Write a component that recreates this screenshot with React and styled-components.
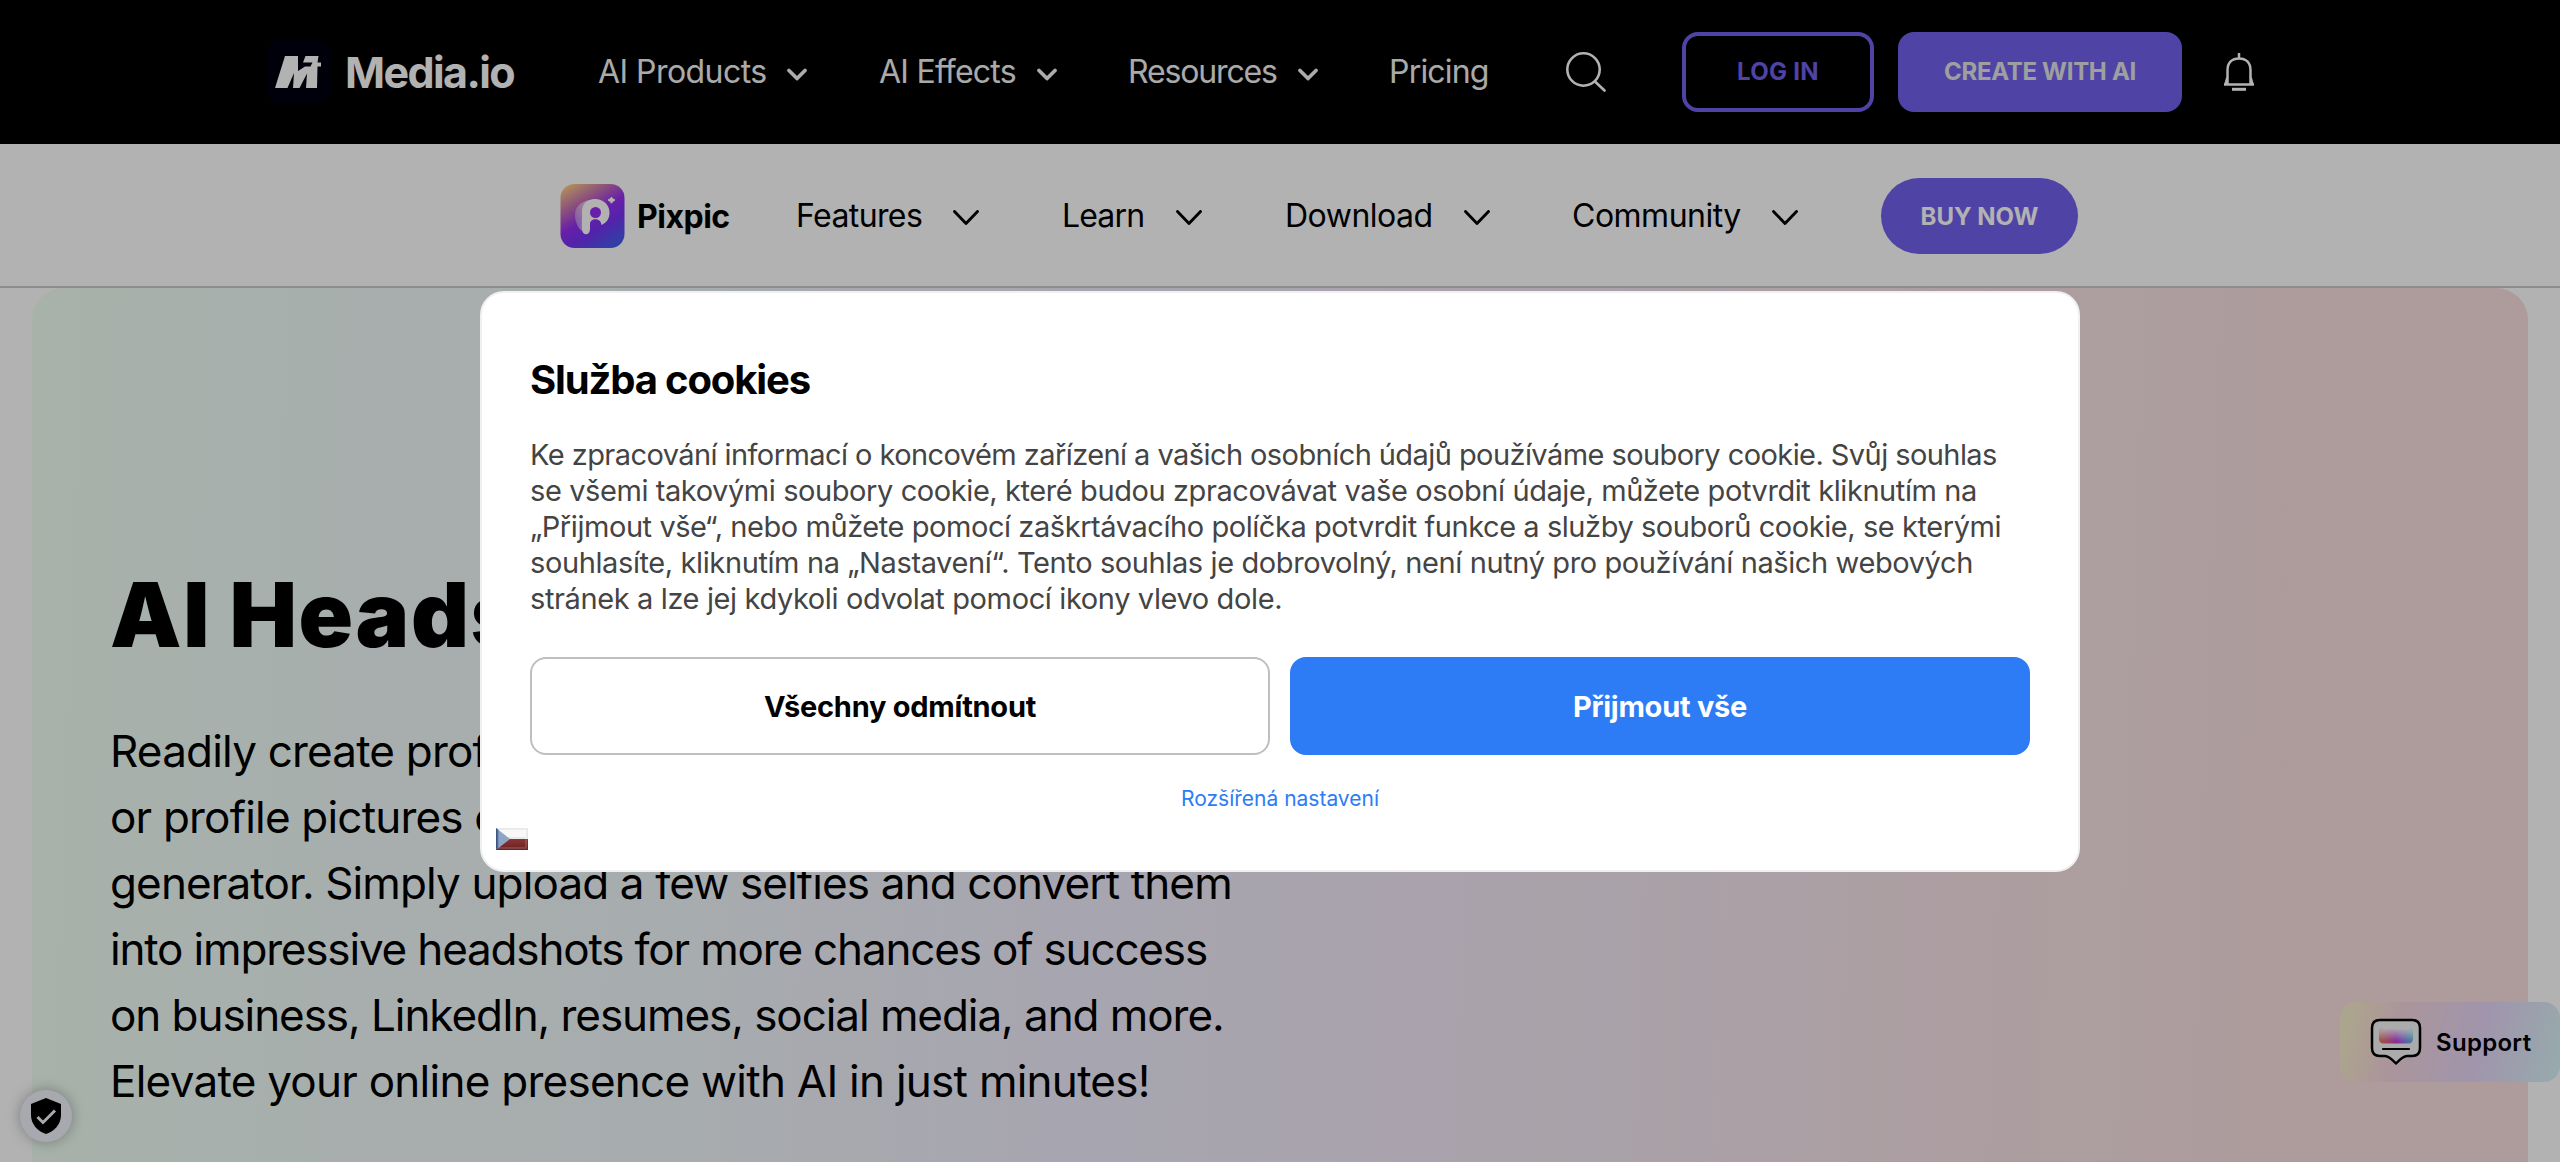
import React from 'react';
import styled, { createGlobalStyle } from 'styled-components';

const Global = createGlobalStyle`
  *, *::before, *::after { box-sizing: border-box; }
  body { margin: 0; background: #fff; overflow: hidden; font-family: Inter, "Open Sans", "Noto Sans", sans-serif; color: #000; }
  h1, h2, p { margin: 0; }
  button, a { font-family: inherit; text-decoration: none; }
`;

const Page = styled.div`
  position: relative;
  height: 1162px;
  overflow: hidden;
  display: flex;
  flex-direction: column;
`;

const TopBar = styled.header`
  flex: 0 0 144px;
  display: flex;
  align-items: center;
  padding-left: 266px;
  background: #000;
  color: #fff;
`;

const Brand = styled.a`
  display: flex;
  align-items: center;
  width: 332px;
  gap: 15px;
  font-size: 43px;
  font-weight: 700;
  letter-spacing: -1.6px;
  white-space: nowrap;
`;

const NavItem = styled.a`
  display: flex;
  align-items: center;
  justify-content: space-between;
  flex: 0 0 auto;
  width: ${(p) => p.$width}px;
  margin-right: ${(p) => p.$after}px;
  font-size: 32px;
  line-height: 40px;
  font-weight: 430;
  letter-spacing: ${(p) => p.$track || 0}px;
  color: ${(p) => p.$color || '#000'};
  white-space: nowrap;
  svg { flex: none; margin-top: ${(p) => p.$drop || 0}px; }
`;

const IconSlot = styled.span`
  display: flex;
  flex: none;
  margin-right: ${(p) => p.$after || 0}px;
`;

const ActionButton = styled.button`
  flex: none;
  width: ${(p) => p.$width}px;
  height: 80px;
  margin-right: ${(p) => p.$after}px;
  padding: 0 0 1px;
  border: 4px solid #7161ed;
  border-radius: 16px;
  background: ${(p) => (p.$filled ? '#7161ed' : 'transparent')};
  color: ${(p) => (p.$filled ? '#e4e4e4' : '#7161ed')};
  font-size: 24px;
  font-weight: 700;
  letter-spacing: ${(p) => p.$track}px;
`;

const SubBar = styled.nav`
  flex: 0 0 144px;
  display: flex;
  align-items: center;
  padding: 2px 0 0 560px;
  border-bottom: 2px solid #cbcbcb;
  background: #fff;
`;

const Product = styled.a`
  display: flex;
  align-items: center;
  gap: 12px;
  width: 236px;
  font-size: 32px;
  font-weight: 700;
  letter-spacing: -0.5px;
`;

const BuyButton = styled.button`
  width: 197px;
  height: 76px;
  border: 0;
  border-radius: 38px;
  background: #7161ed;
  color: #fff;
  font-size: 24px;
  font-weight: 700;
  letter-spacing: 0;
`;

const Hero = styled.main`
  flex: 1;
  margin: 0 32px;
  padding: 260px 0 0 78px;
  border-radius: 32px 32px 0 0;
  background: linear-gradient(92deg, #effff3 0%, #effbf8 12%, #f0f8f9 24%, #f0edfc 42%, #f2eaf8 54%, #f4e7f0 66%, #f7e2e5 80%, #f9dfdf 92%, #f9dfdf 100%);
`;

const Headline = styled.h1`
  font-size: 90px;
  line-height: 134px;
  font-weight: 860;
  letter-spacing: 1.6px;
  word-spacing: -1px;
  white-space: nowrap;
`;

const Lead = styled.p`
  display: flex;
  flex-direction: column;
  margin-top: 36px;
  font-size: 44px;
  line-height: 66px;
`;

const Line = styled.span`
  white-space: nowrap;
  letter-spacing: ${(p) => p.$track}px;
`;

const SupportTab = styled.aside`
  position: absolute;
  right: 0;
  top: 1002px;
  width: 220px;
  height: 80px;
  display: flex;
  align-items: center;
  gap: 14px;
  padding-left: 30px;
  border-radius: 16px;
  background: linear-gradient(104deg, #f7edca 5%, #f5d6de 26%, #e6d6f7 63%, #d8f5f6 100%);
  font-size: 24px;
  font-weight: 600;
  letter-spacing: 0.3px;
`;

const PrivacyBadge = styled.aside`
  position: absolute;
  left: 20px;
  top: 1090px;
  width: 52px;
  height: 52px;
  display: flex;
  align-items: center;
  justify-content: center;
  border-radius: 50%;
  background: #f0f3f9;
  box-shadow: 0 0 14px rgba(0, 0, 0, 0.3);
`;

const Backdrop = styled.div`
  position: absolute;
  inset: 0;
  display: flex;
  align-items: center;
  justify-content: center;
  padding-top: 1px;
  background: rgba(0, 0, 0, 0.3);
`;

const Dialog = styled.section`
  width: 1600px;
  height: 581px;
  display: flex;
  flex-direction: column;
  padding: 63px 48px 0;
  border: 2px solid #f0f0f0;
  border-radius: 24px;
  background: #fff;
`;

const DialogTitle = styled.h2`
  font-size: 40px;
  line-height: 48px;
  font-weight: 700;
  letter-spacing: -1.15px;
`;

const DialogText = styled.p`
  display: flex;
  flex-direction: column;
  margin-top: 33px;
  color: #444;
  font-size: 29px;
  line-height: 36px;
`;

const Choices = styled.div`
  display: flex;
  gap: 20px;
  margin-top: 40px;
`;

const Choice = styled.button`
  flex: 1;
  height: 98px;
  border: 2px solid ${(p) => (p.$primary ? '#2d7cf6' : '#bfbfbf')};
  border-radius: 16px;
  background: ${(p) => (p.$primary ? '#2d7cf6' : '#fff')};
  color: ${(p) => (p.$primary ? '#fff' : '#000')};
  font-size: 29px;
  font-weight: 700;
  letter-spacing: -0.25px;
`;

const SettingsLink = styled.a`
  align-self: center;
  margin-top: 30px;
  color: #2d7cf6;
  font-size: 21px;
  line-height: 28px;
`;

const Language = styled.div`
  display: flex;
  margin: 15px 0 0 -34px;
`;

const SmallChevron = () => (
  <svg width="20" height="14" viewBox="0 0 20 14" fill="none" stroke="#f7f7f7" strokeWidth="3.6" strokeLinecap="round" strokeLinejoin="round">
    <path d="M2 2.4 10 10.6 18 2.4" />
  </svg>
);

const WideChevron = () => (
  <svg width="26" height="16" viewBox="0 0 26 16" fill="none" stroke="#000" strokeWidth="2.9" strokeLinecap="round" strokeLinejoin="round">
    <path d="M1.5 1.5 13 13.4 24.5 1.5" />
  </svg>
);

const MediaLogo = () => (
  <svg width="64" height="64" viewBox="0 0 64 64">
    <rect width="64" height="64" rx="14" fill="#010110" />
    <path fill="#fff" d="M9 48 19 16H32V31L39 26.500H44.500L46.500 22.500H37L39.500 16H52.500L51.500 22.500H55V26.500H51.500L51 48H40L41 33.500 33.500 48H27L28 33 21.500 48Z" />
  </svg>
);

const PixpicLogo = () => (
  <svg width="65" height="64" viewBox="0 0 65 64">
    <defs>
      <linearGradient id="px" x1="0.12" y1="0" x2="0.72" y2="1">
        <stop offset="0" stopColor="#ffd080" />
        <stop offset="0.28" stopColor="#c874b0" />
        <stop offset="0.52" stopColor="#942ff0" />
        <stop offset="0.72" stopColor="#7733f5" />
        <stop offset="1" stopColor="#4a58ee" />
      </linearGradient>
      <linearGradient id="pg" x1="0" y1="0" x2="1" y2="0">
        <stop offset="0" stopColor="#fff" stopOpacity="0.35" />
        <stop offset="1" stopColor="#fff" stopOpacity="0.8" />
      </linearGradient>
    </defs>
    <rect x="0.500" width="64" height="64" rx="14" fill="url(#px)" />
    <path d="M35 15.500C22 16 15 22 15 31C15 38 18 44 22 47L29 30Z" fill="url(#pg)" />
    <path d="M35 15C27 15 22 20 22 28V45C22 52 30 52 30 45V40C30 37 32.500 35.300 35.500 35.300C39 35.300 41 37.500 41.500 41C47 38.500 49.500 34 49.500 28.500C49.500 20.500 43 15 35 15Z" fill="#fff" />
    <circle cx="35.500" cy="28.500" r="5.500" fill="#942ff0" />
    <path d="M51.500 13.200 53 15 55 16 53 17.200 51.500 19.200 50 17.200 48 16 50 15Z" fill="#fff" stroke="#fff" />
  </svg>
);

const SearchIcon = () => (
  <svg width="40" height="40" viewBox="0 0 40 40" fill="none" stroke="#fff" strokeWidth="2.600" strokeLinecap="round">
    <circle cx="17.500" cy="17.500" r="16.200" />
    <path d="m29.500 30 9 8.500" />
  </svg>
);

const BellIcon = () => (
  <svg width="30" height="38" viewBox="0 0 30 38" fill="none" stroke="#fff" strokeWidth="2.500">
    <path d="M15 0v5M3.500 31V17.500C3.500 9.500 8 5.500 15 5.500S26.500 9.500 26.500 17.500V31M0 31.500h30M3.500 24 1.500 31M26.500 24l2 7" />
    <path d="M8 36.300h14" strokeWidth="3" />
  </svg>
);

const ChatIcon = () => (
  <svg width="52" height="48" viewBox="0 0 52 48">
    <defs>
      <linearGradient id="chat" x1="0" y1="0.400" x2="1" y2="0.300">
        <stop offset="0" stopColor="#e8785c" />
        <stop offset="0.480" stopColor="#c63ddb" />
        <stop offset="0.620" stopColor="#a26af0" />
        <stop offset="1" stopColor="#52cbe0" />
      </linearGradient>
      <linearGradient id="fade" x1="0" y1="0" x2="0" y2="1">
        <stop offset="0" stopColor="#fff" stopOpacity="0.950" />
        <stop offset="1" stopColor="#fff" stopOpacity="0" />
      </linearGradient>
    </defs>
    <path d="M10 2H42Q50 2 50 10V30Q50 38 42 38H37Q33 38 26 45.500Q19 38 15 38H10Q2 38 2 30V10Q2 2 10 2Z" fill="#f5f5f7" stroke="#000" strokeWidth="2.500" strokeLinejoin="round" />
    <rect x="9" y="10" width="34" height="15.500" rx="4.500" fill="url(#chat)" />
    <rect x="9" y="10" width="34" height="13" rx="4.500" fill="url(#fade)" />
    <path d="M13 31H39" stroke="#000" strokeWidth="2.200" strokeLinecap="round" />
  </svg>
);

const ShieldIcon = () => (
  <svg width="30" height="36" viewBox="0 0 30 36">
    <path d="M15 0 30 6V17C30 26 23.500 33.500 15 36C6.500 33.500 0 26 0 17V6Z" fill="#000" />
    <path d="m6.500 19 5.500 5.500L24 12.500" fill="none" stroke="#f0f3f9" strokeWidth="3" />
  </svg>
);

const CzechFlag = () => (
  <svg width="32" height="22" viewBox="0 0 32 22">
    <defs>
      <linearGradient id="red" x1="0" y1="0" x2="0" y2="1">
        <stop offset="0" stopColor="#8b3434" />
        <stop offset="1" stopColor="#6b2022" />
      </linearGradient>
    </defs>
    <rect width="32" height="11" fill="#e9e9e9" />
    <rect x="2" y="2" width="28" height="7" fill="#f8f8f8" />
    <rect y="11" width="32" height="11" fill="url(#red)" />
    <path d="M0 0 14 11 0 22Z" fill="#8ea4c4" />
    <path d="M0 0 2.500 2V20L0 22Z" fill="#3a5584" />
    <rect x="2" y="2" width="28" height="18" fill="none" stroke="#fff" strokeOpacity="0.180" strokeWidth="1.500" />
  </svg>
);

const MAIN_NAV = [
  { label: 'AI Products', width: 209, after: 72, track: -0.55, menu: true },
  { label: 'AI Effects', width: 178, after: 71, track: -0.75, menu: true },
  { label: 'Resources', width: 190, after: 71, track: -1.15, menu: true },
  { label: 'Pricing', width: 100, after: 77, track: -0.8 },
];

const SUB_NAV = [
  { label: 'Features', width: 183, after: 83, track: -0.6 },
  { label: 'Learn', width: 140, after: 83, track: -0.85 },
  { label: 'Download', width: 205, after: 82, track: -0.5 },
  { label: 'Community', width: 226, after: 83, track: -0.5 },
];

const LEAD = [
  ['Readily create professional AI headshots, avatars,', -0.8],
  ['or profile pictures online with our AI headshot', -0.8],
  ['generator. Simply upload a few selfies and convert them', -0.87],
  ['into impressive headshots for more chances of success', -1.17],
  ['on business, LinkedIn, resumes, social media, and more.', -1.06],
  ['Elevate your online presence with AI in just minutes!', -0.74],
];

const COOKIE_TEXT = [
  ['Ke zpracování informací o koncovém zařízení a vašich osobních údajů používáme soubory cookie. Svůj souhlas', -0.57],
  ['se všemi takovými soubory cookie, které budou zpracovávat vaše osobní údaje, můžete potvrdit kliknutím na', -0.415],
  ['„Přijmout vše“, nebo můžete pomocí zaškrtávacího políčka potvrdit funkce a služby souborů cookie, se kterými', -0.435],
  ['souhlasíte, kliknutím na „Nastavení“. Tento souhlas je dobrovolný, není nutný pro používání našich webových', -0.39],
  ['stránek a lze jej kdykoli odvolat pomocí ikony vlevo dole.', -0.38],
];

export default function App() {
  return (
    <Page>
      <Global />
      <TopBar>
        <Brand><MediaLogo />Media.io</Brand>
        {MAIN_NAV.map((n) => (
          <NavItem key={n.label} $width={n.width} $after={n.after} $track={n.track} $color="#f4f4f4" $drop={5}>
            {n.label}{n.menu && <SmallChevron />}
          </NavItem>
        ))}
        <IconSlot $after={76}><SearchIcon /></IconSlot>
        <ActionButton $width={192} $after={24} $track={0.3}>LOG IN</ActionButton>
        <ActionButton $width={284} $after={42} $track={-0.3} $filled>CREATE WITH AI</ActionButton>
        <IconSlot><BellIcon /></IconSlot>
      </TopBar>
      <SubBar>
        <Product><PixpicLogo />Pixpic</Product>
        {SUB_NAV.map((n) => (
          <NavItem key={n.label} $width={n.width} $after={n.after} $track={n.track} $drop={4}>
            {n.label}<WideChevron />
          </NavItem>
        ))}
        <BuyButton>BUY NOW</BuyButton>
      </SubBar>
      <Hero>
        <Headline>AI Headshot Generator</Headline>
        <Lead>
          {LEAD.map(([t, track]) => <Line key={t} $track={track}>{t}</Line>)}
        </Lead>
      </Hero>
      <SupportTab><ChatIcon />Support</SupportTab>
      <PrivacyBadge><ShieldIcon /></PrivacyBadge>
      <Backdrop>
        <Dialog>
          <DialogTitle>Služba cookies</DialogTitle>
          <DialogText>
            {COOKIE_TEXT.map(([t, track]) => <Line key={t} $track={track}>{t}</Line>)}
          </DialogText>
          <Choices>
            <Choice>Všechny odmítnout</Choice>
            <Choice $primary>Přijmout vše</Choice>
          </Choices>
          <SettingsLink>Rozšířená nastavení</SettingsLink>
          <Language><CzechFlag /></Language>
        </Dialog>
      </Backdrop>
    </Page>
  );
}
